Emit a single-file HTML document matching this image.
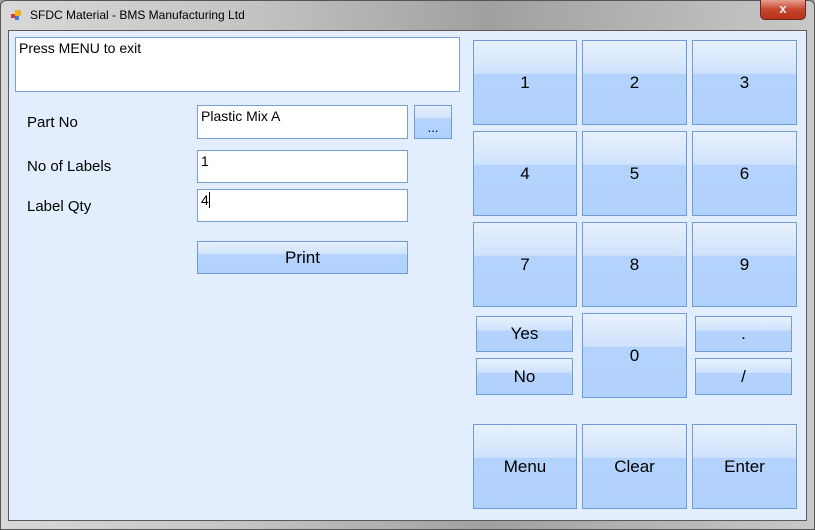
<!DOCTYPE html>
<html><head><meta charset="utf-8"><style>
*{box-sizing:border-box;margin:0;padding:0}
body{width:815px;height:530px;overflow:hidden;font-family:"Liberation Sans",sans-serif;background:#a0a0a0;position:relative}
.frame{position:absolute;left:0;top:0;width:815px;height:530px;background:linear-gradient(90deg,#d8d8d8 0%,#c4c4c4 30%,#a0a0a0 60%,#c8c8c8 100%);border:1px solid #555;border-radius:6px 6px 0 0}
.title{position:absolute;left:30px;top:8px;font-size:12px;color:#000}
.icon{position:absolute;left:11px;top:10px;width:10px;height:10px}
.close{position:absolute;left:760px;top:0;width:46px;height:20px;border:1px solid #6b2a20;border-top:none;border-radius:0 0 5px 5px;background:linear-gradient(#e6a08f,#c8452e 50%,#b53219);color:#eee;font-weight:bold;font-size:13px;text-align:center;line-height:18px}
.client{position:absolute;left:8px;top:30px;width:799px;height:491px;background:#e2eefd;border:1px solid #5a5a5a}
.tb{position:absolute;background:#fff;border:1px solid #7a9fd1;font-size:14px;padding:2px 3px;color:#000}
.lbl{position:absolute;font-size:15px;color:#000}
.btn{position:absolute;border:1px solid #6f9bd6;background:linear-gradient(#e8f1fd 0%,#cfe2fc 39%,#b3d3fc 40%,#b1d2fd 100%);display:flex;align-items:center;justify-content:center;font-size:17px;color:#000}
</style></head><body>
<div class="frame"></div>
<svg class="icon" viewBox="0 0 10 10"><rect x="0" y="4" width="4" height="4" fill="#d33"/><rect x="4" y="0" width="6" height="6" fill="#f0b020"/><rect x="4" y="6" width="4" height="4" fill="#3a7ad8"/></svg>
<div class="title">SFDC Material - BMS Manufacturing Ltd</div>
<div class="close">x</div>
<div class="client"></div>
<div class="tb" style="left:15px;top:37px;width:445px;height:55px">Press MENU to exit</div>
<div class="lbl" style="left:27px;top:114px">Part No</div>
<div class="lbl" style="left:27px;top:158px">No of Labels</div>
<div class="lbl" style="left:27px;top:198px">Label Qty</div>
<div class="tb" style="left:197px;top:105px;width:211px;height:34px">Plastic Mix A</div>
<div class="btn" style="left:414px;top:105px;width:38px;height:34px;font-size:13px;align-items:flex-end;padding-bottom:3px">...</div>
<div class="tb" style="left:197px;top:150px;width:211px;height:33px">1</div>
<div class="tb" style="left:197px;top:189px;width:211px;height:33px">4<span style="display:inline-block;width:1px;height:16px;background:#000;vertical-align:-3px"></span></div>
<div class="btn" style="left:197px;top:241px;width:211px;height:33px">Print</div>

<div class="btn" style="left:473px;top:40px;width:104px;height:85px">1</div>
<div class="btn" style="left:582px;top:40px;width:105px;height:85px">2</div>
<div class="btn" style="left:692px;top:40px;width:105px;height:85px">3</div>
<div class="btn" style="left:473px;top:131px;width:104px;height:85px">4</div>
<div class="btn" style="left:582px;top:131px;width:105px;height:85px">5</div>
<div class="btn" style="left:692px;top:131px;width:105px;height:85px">6</div>
<div class="btn" style="left:473px;top:222px;width:104px;height:85px">7</div>
<div class="btn" style="left:582px;top:222px;width:105px;height:85px">8</div>
<div class="btn" style="left:692px;top:222px;width:105px;height:85px">9</div>
<div class="btn" style="left:476px;top:316px;width:97px;height:36px">Yes</div>
<div class="btn" style="left:476px;top:358px;width:97px;height:37px">No</div>
<div class="btn" style="left:582px;top:313px;width:105px;height:85px">0</div>
<div class="btn" style="left:695px;top:316px;width:97px;height:36px">.</div>
<div class="btn" style="left:695px;top:358px;width:97px;height:37px">/</div>
<div class="btn" style="left:473px;top:424px;width:104px;height:85px">Menu</div>
<div class="btn" style="left:582px;top:424px;width:105px;height:85px">Clear</div>
<div class="btn" style="left:692px;top:424px;width:105px;height:85px">Enter</div>
</body></html>
